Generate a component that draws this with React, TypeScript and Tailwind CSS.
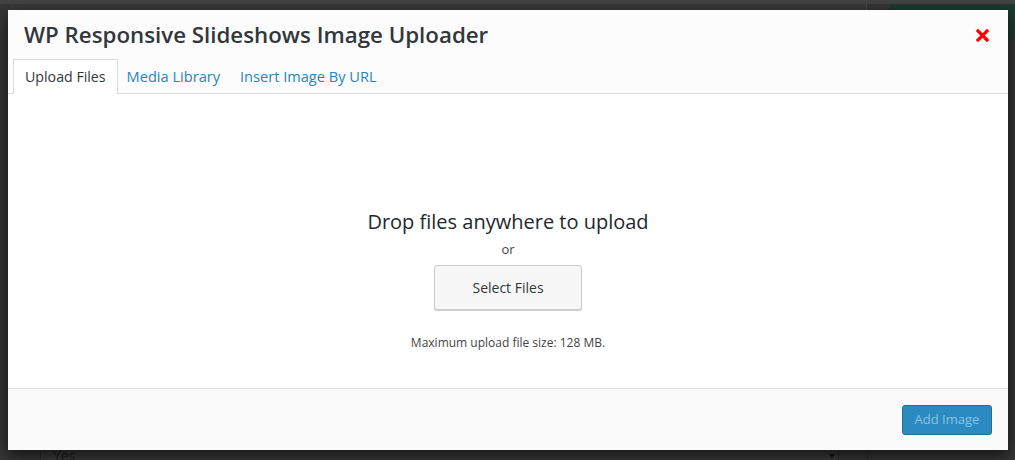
import React from 'react';

const tabs = ['Upload Files', 'Media Library', 'Insert Image By URL'];

const CloseIcon = () => (
  <svg width="13" height="13" viewBox="0 0 13 13" aria-hidden="true">
    <path d="M2 2 L11 11 M11 2 L2 11" stroke="#ff0000" strokeWidth="3.2" strokeLinecap="square" />
  </svg>
);

export default function App() {
  return (
    <div className="relative w-[1015px] h-[460px] overflow-hidden bg-[#363636] font-['Open_Sans',sans-serif]">
      {/* page behind the overlay */}
      <div className="h-[4px] bg-[#434343]" />
      <div className="flex">
        <div className="ml-[10px] w-[857px] h-[40px] border-r border-[#4a4a4a] bg-[#3a3a3a]" />
        <div className="ml-[22px] flex-1 h-[36px] bg-[#1d3a30]" />
      </div>
      <div className="absolute left-[40px] top-[446px] w-[799px] h-[20px] border-l border-r border-[#2a2a2a] bg-[#3a3a3a] flex items-start">
        <span className="ml-[12px] mt-[1px] text-[14px] leading-[18px] text-[#1e1e1e]">Yes</span>
        <span className="ml-auto mr-[3px] mt-[8px] w-0 h-0 border-l-[3px] border-r-[3px] border-t-[4px] border-l-transparent border-r-transparent border-t-[#111]" />
      </div>
      <div className="absolute left-[867px] top-[440px] w-px h-[20px] bg-[#2e2e2e]" />

      {/* modal */}
      <div className="absolute left-[8px] top-[10px] w-[1000px] h-[440px] flex flex-col bg-white shadow-[0_5px_15px_rgba(0,0,0,0.7)]">
        <div className="bg-[#fcfcfc] border-b border-[#dddddd]">
          <div className="flex items-start h-[49px]">
            <h1 className="ml-[16px] mt-[10px] text-[22.3px] leading-[30px] font-semibold text-[#32373c]">
              WP Responsive Slideshows Image Uploader
            </h1>
            <button className="ml-auto mr-[19px] mt-[19px] p-0 leading-none">
              <CloseIcon />
            </button>
          </div>
          <div className="flex pl-[5px] h-[35px] -mb-px">
            {tabs.map((t, i) =>
              i === 0 ? (
                <div
                  key={t}
                  className="px-[11px] h-[36px] flex items-center border border-[#dddddd] border-b-white bg-white text-[14.2px] text-[#32373c]"
                >
                  {t}
                </div>
              ) : (
                <div
                  key={t}
                  className={`${i === 1 ? 'pl-[9px]' : 'pl-[10px]'} pr-[10px] h-[35px] flex items-center text-[14.6px] text-[#2786b8]`}
                >
                  {t}
                </div>
              )
            )}
          </div>
        </div>

        <div className="flex-1 flex flex-col items-center bg-white pt-[114px]">
          <p className="text-[20px] leading-[28px] text-[#23282d]">Drop files anywhere to upload</p>
          <p className="mt-[3px] text-[13px] leading-[20px] text-[#444]">or</p>
          <button className="mt-[6px] w-[148px] h-[45px] rounded-[3px] border border-[#cccccc] bg-[#f7f7f7] shadow-[0_1px_0_#cccccc] text-[14px] text-[#32373c]">
            Select Files
          </button>
          <p className="mt-[24px] text-[12px] leading-[18px] text-[#444]">Maximum upload file size: 128 MB.</p>
        </div>

        <div className="h-[62px] border-t border-[#dddddd] bg-[#fafafa] flex items-center justify-end pr-[16px]">
          <button className="w-[90px] h-[30px] rounded-[3px] border border-[#1f6f9b] bg-[#2b8bc0] text-[13px] text-[#8cc2e0]">
            Add Image
          </button>
        </div>
      </div>
    </div>
  );
}
